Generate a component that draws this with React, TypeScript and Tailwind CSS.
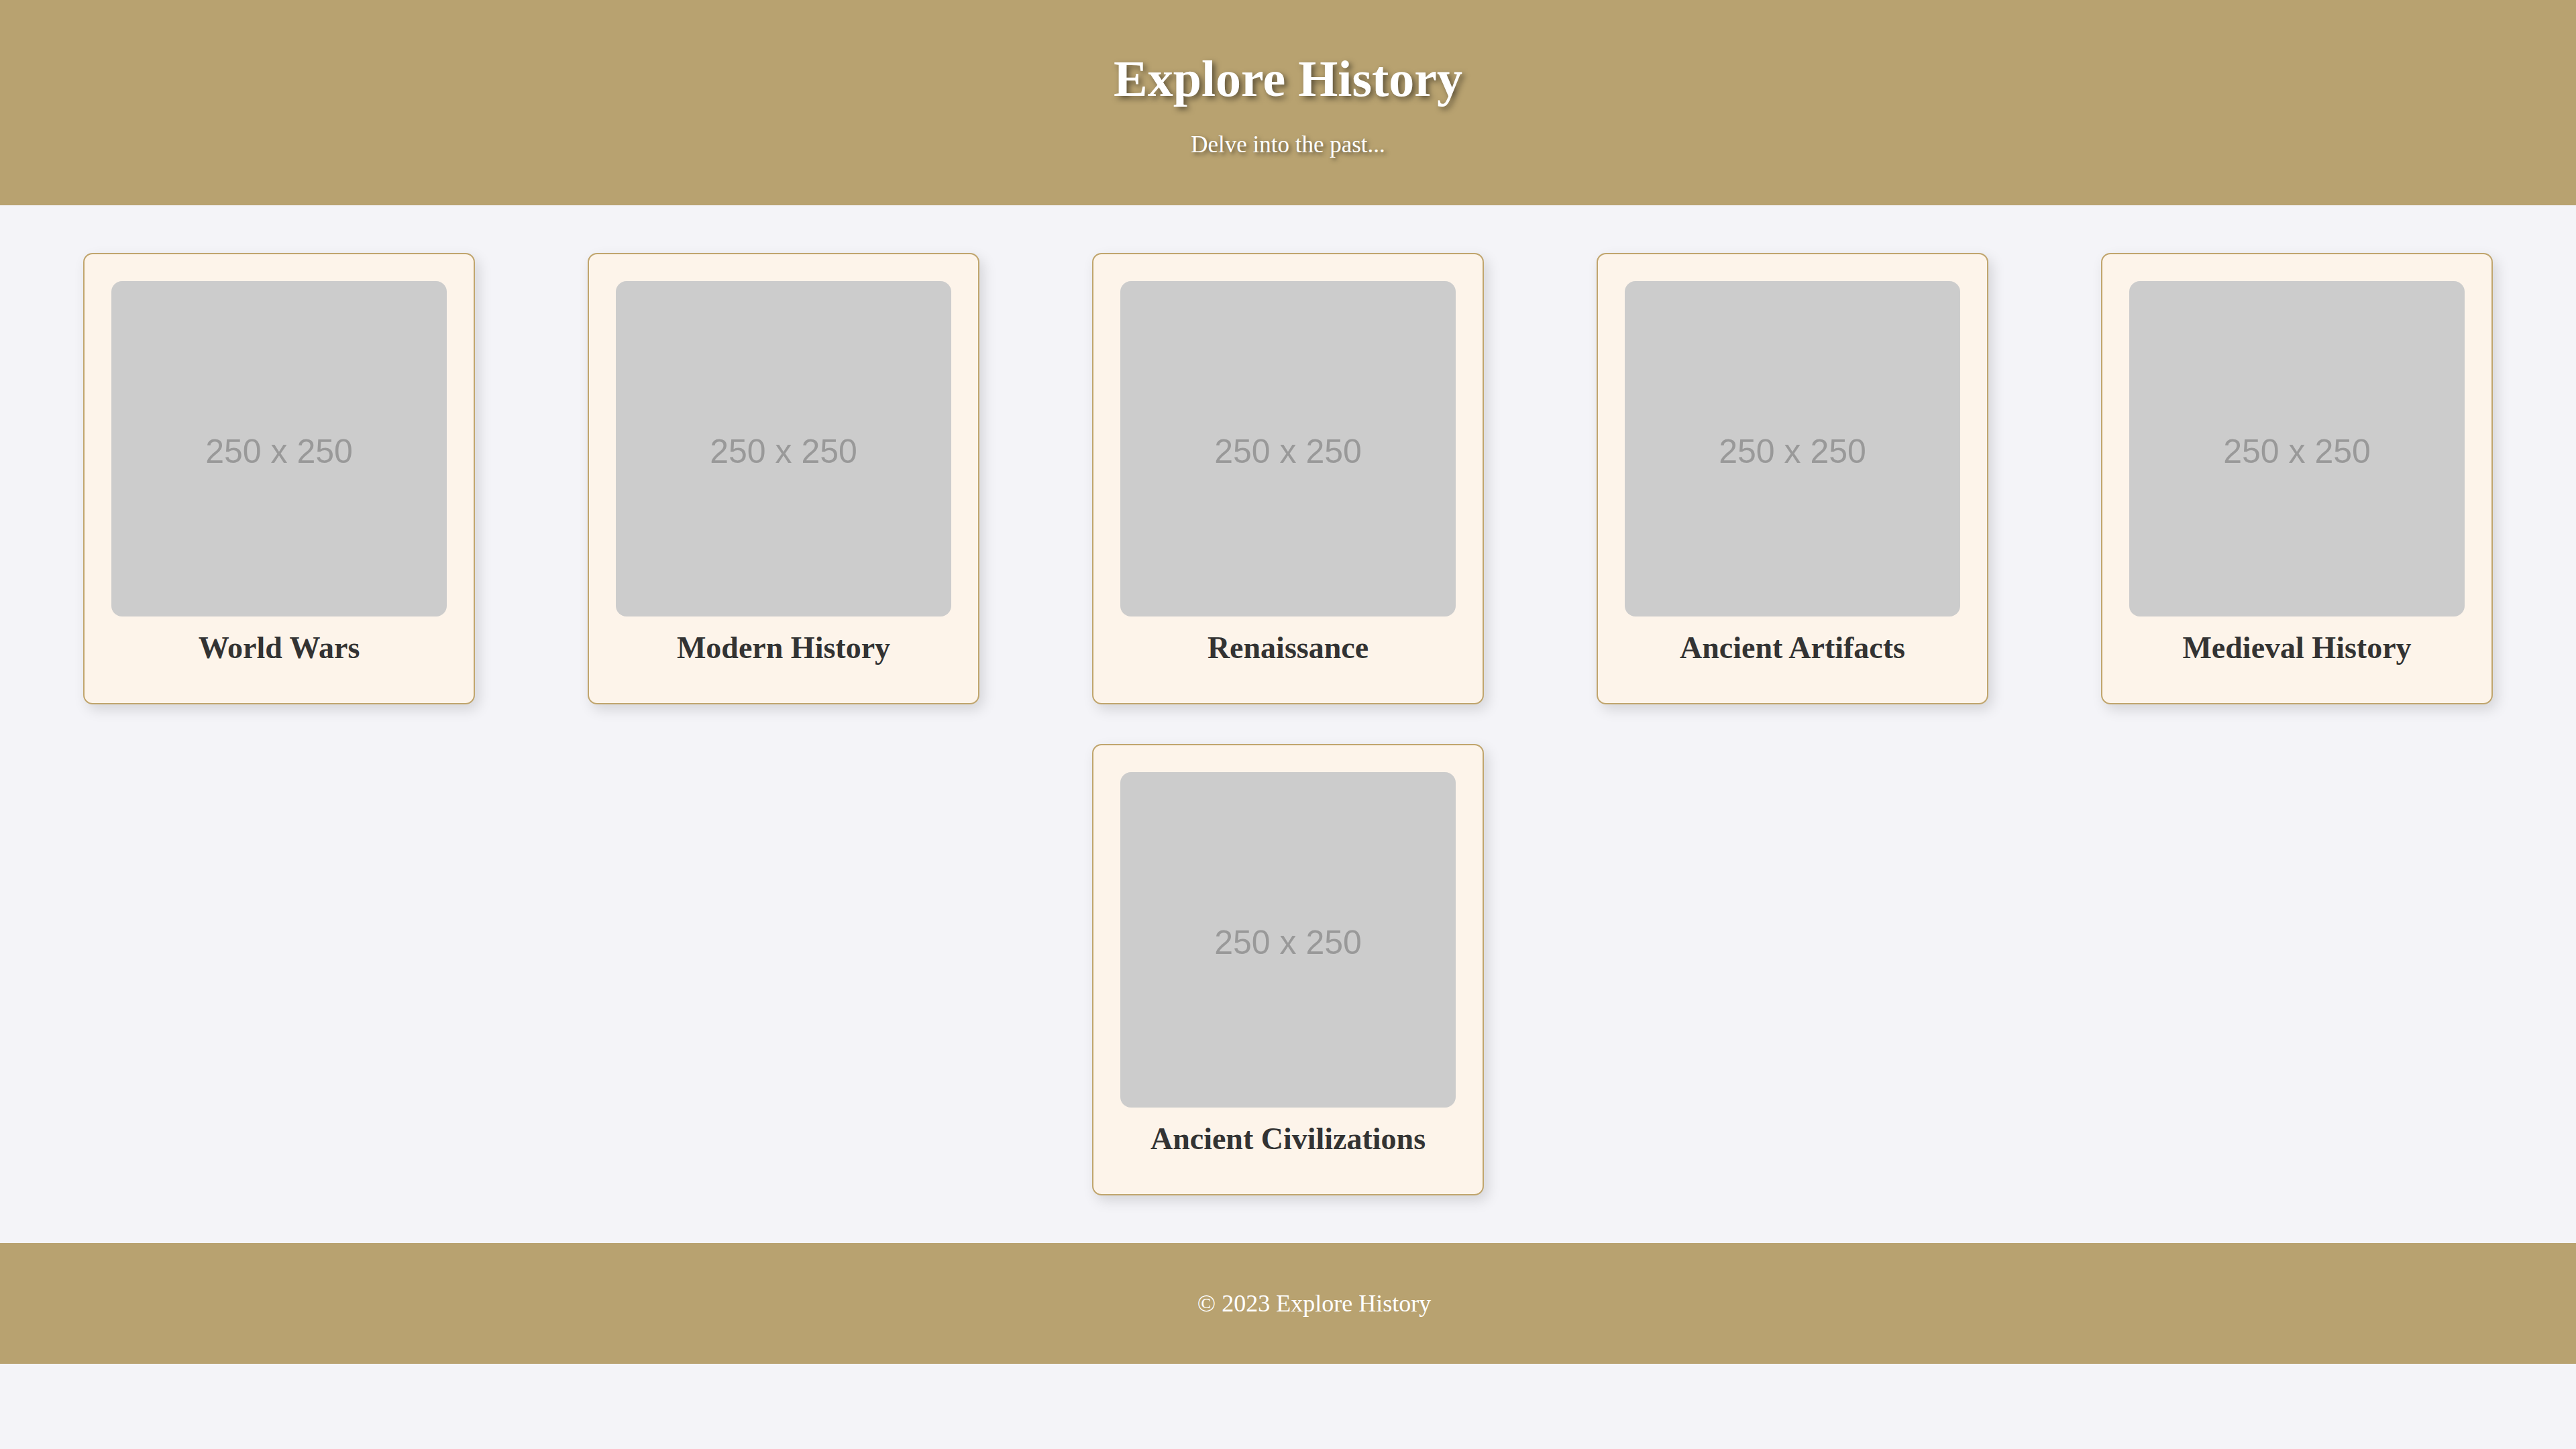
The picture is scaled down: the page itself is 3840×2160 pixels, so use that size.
const topics = [
  "World Wars",
  "Modern History",
  "Renaissance",
  "Ancient Artifacts",
  "Medieval History",
  "Ancient Civilizations",
];

function TopicCard({ title }: { title: string }) {
  return (
    <div className="w-[584px] rounded-[14px] border-2 border-[#c0a56d] bg-[#fdf4ea] p-[40px] text-center shadow-[6px_8px_20px_rgba(0,0,0,0.13)]">
      {/* placeholder image */}
      <div className="flex h-[500px] w-[500px] items-center justify-center rounded-[16px] bg-[#cccccc] pt-[8px] font-['Liberation_Sans',Arial,sans-serif] text-[50px] text-[#999999]">
        250 x 250
      </div>
      <h3 className="mt-[24px] mb-[19px] text-[46px] leading-none font-bold text-[#333333]">
        {title}
      </h3>
    </div>
  );
}

export default function App() {
  return (
    <div className="min-h-screen bg-[#f4f4f8] font-['Liberation_Serif',Georgia,serif]">
      {/* Header */}
      <header className="flex h-[306px] flex-col items-center bg-[#b8a270] pt-[79px] text-white">
        <h1 className="text-[76px] leading-none font-bold [text-shadow:4px_4px_8px_rgba(0,0,0,0.5)]">
          Explore History
        </h1>
        <p className="mt-[43px] text-[35px] leading-none [text-shadow:3px_3px_6px_rgba(0,0,0,0.5)]">
          Delve into the past...
        </p>
      </header>

      {/* Topics */}
      <main className="flex flex-wrap justify-center gap-x-[168px] gap-y-[59px] px-[124px] py-[71px]">
        {topics.map((t) => (
          <TopicCard key={t} title={t} />
        ))}
      </main>

      {/* Footer */}
      <footer className="flex h-[180px] items-center justify-center bg-[#b8a270] pl-[78px] text-[36px] text-white">
        © 2023 Explore History
      </footer>
    </div>
  );
}
